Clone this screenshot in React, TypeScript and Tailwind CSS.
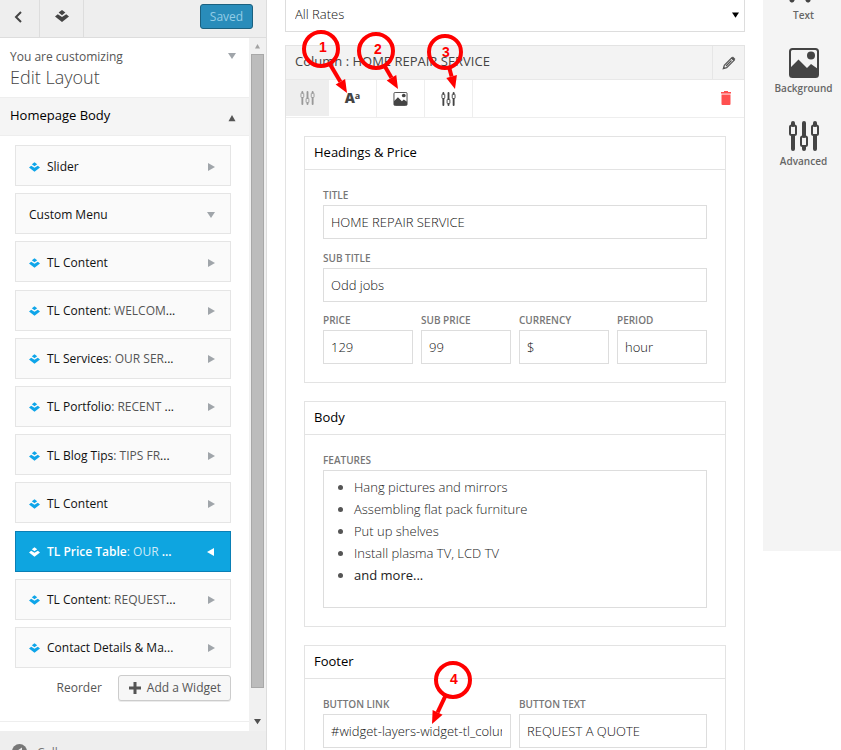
import React, { useId } from "react";

function LayersIcon({ className }: { className: string }) {
  return (
    <svg viewBox="0 0 14 12" className={className} fill="currentColor" aria-hidden="true">
      <path d="M7 0 10.4 2.600 7 5.200 3.600 2.600Z" />
      <path d="M0 6.500 2.800 4.300 7 7 11.200 4.300 14 6.500 7 12Z" />
    </svg>
  );
}

function Triangle({ dir, className }: { dir: "up" | "down" | "left" | "right"; className: string }) {
  const d = {
    up: "M0 7 4 0 8 7Z",
    down: "M0 1 8 1 4 7Z",
    left: "M7 0 7 8 0 4Z",
    right: "M1 0 8 4 1 8Z",
  }[dir];
  return (
    <svg viewBox="0 0 8 8" className={className} fill="currentColor" aria-hidden="true">
      <path d={d} />
    </svg>
  );
}

function SlidersIcon({ className }: { className: string }) {
  return (
    <svg viewBox="0 0 30 30" className={className} fill="none" stroke="currentColor" aria-hidden="true">
      <path d="M4 2V4M4 15V28M15 2V15M15 26V28M26 2V4M26 15V28" strokeWidth="4" strokeLinecap="round" />
      <rect x="1" y="4.500" width="6" height="9.500" rx="1.500" strokeWidth="2" />
      <rect x="12" y="15.500" width="6" height="9.500" rx="1.500" strokeWidth="2" />
      <rect x="23" y="4.500" width="6" height="9.500" rx="1.500" strokeWidth="2" />
    </svg>
  );
}

function PictureIcon({ className }: { className: string }) {
  return (
    <svg viewBox="0 0 30 30" className={className} aria-hidden="true">
      <rect x="1" y="1" width="28" height="28" rx="2.500" fill="none" stroke="currentColor" strokeWidth="2" />
      <circle cx="22" cy="7.500" r="4" fill="currentColor" />
      <path d="M1 20 9.500 11.500 18 20 22 16 29 21V28H1Z" fill="currentColor" />
    </svg>
  );
}

type Item = { name: string; extra?: string; icon?: boolean; active?: boolean; dots?: boolean };

const items: Item[] = [
  { name: "Slider", icon: true },
  { name: "Custom Menu" },
  { name: "TL Content", icon: true },
  { name: "TL Content", extra: "WELCOM", icon: true },
  { name: "TL Services", extra: "OUR SER", icon: true },
  { name: "TL Portfolio", extra: "RECENT ", icon: true },
  { name: "TL Blog Tips", extra: "TIPS FR", icon: true },
  { name: "TL Content", icon: true },
  { name: "TL Price Table", extra: "OUR ", icon: true, active: true },
  { name: "TL Content", extra: "REQUEST", icon: true },
  { name: "Contact Details & Ma", icon: true, dots: true },
];

function WidgetRow({ item }: { item: Item }) {
  return (
    <li>
      <button
        className={
          item.active
            ? "flex h-[41px] w-full items-center border border-[#0a7fb5] bg-[#0ea5e0] pr-[15px] pl-[13px] pt-[2px] text-left text-[12px] font-semibold text-white"
            : "flex h-[41px] w-full items-center border border-[#e5e5e5] bg-[#fafafa] pr-[15px] pl-[13px] pt-[2px] text-left text-[12px] font-medium text-[#111]"
        }
      >
        {item.icon && (
          <LayersIcon className={item.active ? "mr-[7px] h-[10px] w-[11px]" : "mr-[7px] h-[10px] w-[11px] text-[#0ea5e9]"} />
        )}
        <span className="flex-1 whitespace-pre">
          {item.name}
          {item.extra && (
            <span className={item.active ? "font-medium text-[#cdeaf8]" : "font-normal text-[#555]"}>
              <span>: </span>
              {item.extra}
            </span>
          )}
          {(item.extra || item.dots) && "..."}
        </span>
        <Triangle
          dir={item.active ? "left" : item.icon ? "right" : "down"}
          className={item.active ? "h-2 w-2" : "h-2 w-2 text-[#a0a5aa]"}
        />
      </button>
    </li>
  );
}

function Sidebar() {
  return (
    <aside className="flex w-[267px] shrink-0 flex-col border-r border-[#ddd] bg-[#eee]">
      <div className="flex h-[38px] shrink-0 border-b border-[#ddd] text-[#444]">
        <button aria-label="Back" className="flex w-10 items-center justify-center border-r border-[#ddd] pr-1 pb-1">
          <svg viewBox="0 0 8 12" className="h-3 w-2" fill="none" stroke="currentColor" strokeWidth="2" aria-hidden="true">
            <path d="M7 1 2 6 7 11" />
          </svg>
        </button>
        <button aria-label="Layers" className="flex w-11 items-center justify-center border-r border-[#ddd] pb-[5px]">
          <LayersIcon className="h-3 w-[14px]" />
        </button>
        <button className="mt-1 mr-[13px] ml-auto h-[25px] w-[53px] rounded-[3px] border border-[#1b607f] bg-[#298cba] text-[12px] text-[#94cde7]">
          Saved
        </button>
      </div>
      <div className="flex min-h-0 flex-1">
        <div className="flex min-w-0 flex-1 flex-col bg-white">
          <div className="flex h-[59px] shrink-0 justify-between px-[10px] pt-[10px] pr-[13px]">
            <div>
              <p className="text-[12px] leading-[18px] text-[#555]">You are customizing</p>
              <h1 className="text-[18px] leading-[22px] font-light text-[#444]">Edit Layout</h1>
            </div>
            <Triangle dir="down" className="mt-[4px] h-2 w-2 text-[#a0a5aa]" />
          </div>
          <h2 className="flex h-[39px] shrink-0 items-center justify-between border-y border-[#eee] bg-[#f5f5f5] pr-[13px] pb-px pl-[10px] text-[13px] font-medium text-black">
            Homepage Body
            <Triangle dir="up" className="mt-1 h-[7px] w-2 text-[#555]" />
          </h2>
          <ul className="mr-[18px] ml-[15px] mt-[9px] flex h-[523px] shrink-0 flex-col justify-between">
            {items.map((item, i) => (
              <WidgetRow key={i} item={item} />
            ))}
          </ul>
          <div className="mt-[7px] mr-[18px] mb-5 flex items-center justify-end gap-4 text-[12px] text-[#555]">
            <button>Reorder</button>
            <button className="flex h-[26px] items-center gap-[5px] rounded-[3px] border border-[#ccc] bg-[#f7f7f7] px-[9px] shadow-[0_1px_0_rgba(0,0,0,0.08)]">
              <svg viewBox="0 0 14 12" className="h-3 w-[14px]" stroke="#555" strokeWidth="3" aria-hidden="true">
                <path d="M7 0V12M1 6H13" />
              </svg>
              Add a Widget
            </button>
          </div>
          <div className="border-t border-[#eee]" />
        </div>
        <div className="flex w-[17px] shrink-0 flex-col items-center justify-between bg-[#f1f1f1] py-[6px]">
          <Triangle dir="up" className="h-[5px] w-[7px] text-[#a3a3a3]" />
          <div className="mt-[5px] mb-[30px] w-[13px] flex-1 border border-[#a8a8a8] bg-[#bcbcbc]" />
          <Triangle dir="down" className="h-[7px] w-[7px] text-[#505050]" />
        </div>
      </div>
      <button className="flex h-[19px] shrink-0 items-start gap-[10px] overflow-hidden pt-[13px] pl-3 text-left text-[12px] leading-[18px] text-[#777]">
        <svg viewBox="0 0 15 15" className="h-[15px] w-[15px] shrink-0" aria-hidden="true">
          <circle cx="7.500" cy="7.500" r="7.500" fill="#777" />
          <path d="M4 7.500 10 3.500V11.500Z" fill="#eee" />
        </svg>
        Collapse
      </button>
    </aside>
  );
}

function Field({ label, value, className = "" }: { label: string; value: string; className?: string }) {
  const id = useId();
  return (
    <div className={className}>
      <label htmlFor={id} className="mb-[3px] block text-[10px] leading-[14px] font-semibold text-[#777] uppercase">
        {label}
      </label>
      <input
        id={id}
        defaultValue={value}
        className="block h-[34px] w-full border border-[#ddd] bg-white pr-2 pb-px pl-[7px] text-[13px] font-light text-[#111] outline-none"
      />
    </div>
  );
}

function Card({ title, children }: { title: string; children: React.ReactNode }) {
  return (
    <section className="border border-[#e3e3e3] bg-white">
      <h3 className="h-[33px] border-b border-[#e3e3e3] px-[9px] text-[13px] leading-[31px] font-medium text-black">{title}</h3>
      <div className="p-[18px]">{children}</div>
    </section>
  );
}

function Callout({ n, className, r, cx, cy, tx, ty, lx, ly }: {
  n: string; className: string; r: number; cx: number; cy: number; tx: number; ty: number; lx: number; ly: number;
}) {
  const a = Math.atan2(ty - cy, tx - cx);
  const ux = Math.cos(a);
  const uy = Math.sin(a);
  const bx = tx - ux * 13;
  const by = ty - uy * 13;
  return (
    <svg viewBox="0 0 60 70" className={className} aria-hidden="true">
      <circle cx={cx} cy={cy} r={r} fill="none" stroke="#f00" strokeWidth="4" />
      <path d={`M${cx + ux * r} ${cy + uy * r}L${bx} ${by}`} stroke="#f00" strokeWidth="4" />
      <path d={`M${tx} ${ty}L${bx - uy * 5.5} ${by + ux * 5.5}L${bx + uy * 5.5} ${by - ux * 5.5}Z`} fill="#f00" />
      <text x={lx} y={ly} textAnchor="middle" fill="#f00" className="font-['Liberation_Sans'] text-[14px] font-bold">
        {n}
      </text>
    </svg>
  );
}

function Editor() {
  return (
    <main className="relative min-w-0 flex-1 px-[18px]">
      <div className="relative -mt-1">
        <select
          aria-label="Rates"
          className="block h-9 w-full appearance-none border border-[#ddd] bg-white px-[9px] pt-px text-[13px] font-light text-[#111]"
        >
          <option>All Rates</option>
        </select>
        <Triangle dir="down" className="pointer-events-none absolute top-[15px] right-[6px] h-2 w-[7px] text-black" />
      </div>
      <div className="mt-[13px] border border-[#e3e3e3]">
        <div className="flex h-[34px] border-b border-[#e8e8e8] bg-[#f3f3f3]">
          <h2 className="flex-1 px-[9px] text-[13px] leading-[31px] text-[#444]">Column : HOME REPAIR SERVICE</h2>
          <button aria-label="Edit" className="flex w-8 items-center justify-center border-l border-[#e6e6e6] text-[#555]">
            <svg viewBox="0 0 14 14" className="h-[14px] w-[14px]" fill="none" stroke="currentColor" strokeWidth="1.200" aria-hidden="true">
              <path d="M1.500 12.500 2.300 9.300 9.700 1.900 12.100 4.300 4.700 11.700ZM4 10 9.500 4.500" />
              <path d="M10 1.500 12.500 4" strokeWidth="2.500" />
              <path d="M.5 13.500 1.500 10.500 3.500 12.500Z" fill="currentColor" stroke="none" />
            </svg>
          </button>
        </div>
        <div className="flex h-[38px] border-b border-[#eee] text-[#444]">
          <button aria-label="Advanced" className="mb-px flex w-[43px] items-center justify-center bg-[#eee] text-[#999]">
            <SlidersIcon className="h-[14px] w-[15px]" />
          </button>
          <button aria-label="Text" className="flex w-12 justify-center border-r border-[#eee] pt-[8px] text-[14px] leading-[20px] font-extrabold">
            A<span className="text-[9px] leading-[15px] font-bold">a</span>
          </button>
          <button aria-label="Background" className="flex w-12 items-center justify-center border-r border-[#eee]">
            <PictureIcon className="h-[14px] w-[15px]" />
          </button>
          <button aria-label="Settings" className="flex w-12 items-center justify-center border-r border-[#eee]">
            <SlidersIcon className="h-[14px] w-[15px]" />
          </button>
          <button aria-label="Delete" className="mr-[13px] ml-auto pb-[2px] text-[#ff5050]">
            <svg viewBox="0 0 10 14" className="h-[14px] w-[10px]" fill="currentColor" aria-hidden="true">
              <path d="M0 1H3V0H7V1H10V2.500H0Z" />
              <path d="M.5 4H9.500V13Q9.500 14 8.500 14H1.500Q.5 14 .5 13Z" />
              <path d="M.5 2.500H9.500V4H.5Z" opacity=".5" />
            </svg>
          </button>
        </div>
        <div className="flex flex-col gap-[18px] p-[18px]">
          <Card title="Headings & Price">
            <Field label="Title" value="HOME REPAIR SERVICE" className="mb-3" />
            <Field label="Sub Title" value="Odd jobs" className="mb-[11px]" />
            <div className="grid grid-cols-4 gap-2">
              <Field label="Price" value="129" />
              <Field label="Sub Price" value="99" />
              <Field label="Currency" value="$" />
              <Field label="Period" value="hour" />
            </div>
          </Card>
          <Card title="Body">
            <p id="features" className="mb-[3px] text-[10px] leading-[14px] font-semibold text-[#777] uppercase">Features</p>
            <div
              role="textbox"
              aria-multiline="true"
              aria-labelledby="features"
              contentEditable
              suppressContentEditableWarning
              className="h-[138px] border border-[#ddd] pt-[5px] pl-[30px] text-[13px] leading-[22px] font-light text-[#222] outline-none"
            >
              <ul className="list-disc marker:text-[#555]">
                <li>Hang pictures and mirrors</li>
                <li>Assembling flat pack furniture</li>
                <li>Put up shelves</li>
                <li>Install plasma TV, LCD TV</li>
                <li className="font-medium">and more...</li>
              </ul>
            </div>
          </Card>
          <Card title="Footer">
            <div className="grid grid-cols-2 gap-2">
              <Field label="Button Link" value="#widget-layers-widget-tl_column-4" />
              <Field label="Button Text" value="REQUEST A QUOTE" />
            </div>
          </Card>
        </div>
      </div>
      <Callout n="1" className="pointer-events-none absolute top-[28px] left-[33px] h-[70px] w-[60px]" r={17} cx={21} cy={21} tx={47} ty={65} lx={23} ly={24} />
      <Callout n="2" className="pointer-events-none absolute top-[28px] left-[88px] h-[70px] w-[60px]" r={17} cx={21} cy={23} tx={43} ty={61} lx={23} ly={26} />
      <Callout n="3" className="pointer-events-none absolute top-[28px] left-[158px] h-[70px] w-[60px]" r={16} cx={20} cy={24} tx={30} ty={61} lx={21} ly={29} />
      <Callout n="4" className="pointer-events-none absolute top-[656px] left-[163px] h-[70px] w-[60px]" r={17} cx={23} cy={24} tx={2} ty={68} lx={24} ly={28} />
    </main>
  );
}

function Tools() {
  return (
    <nav className="flex h-[551px] w-[78px] shrink-0 flex-col bg-[#f4f4f4] text-[10px] leading-[14px] font-semibold text-[#666]">
      <button className="-mt-[27px] flex h-[73px] flex-col items-center gap-[5px] pl-[3px]">
        <svg viewBox="0 0 30 30" className="h-[30px] w-[30px] shrink-0" aria-hidden="true">
          <path d="M3 27 11 2M19 27 11 2" stroke="#444" strokeWidth="5" strokeLinecap="round" />
        </svg>
        Text
      </button>
      <button className="flex h-[73px] flex-col items-center gap-[3px] pt-[2px] pl-[3px]">
        <PictureIcon className="h-[30px] w-[30px] shrink-0 text-[#444]" />
        Background
      </button>
      <button className="flex h-[73px] flex-col items-center gap-[3px] pt-[2px] pl-[3px]">
        <SlidersIcon className="h-[30px] w-[30px] shrink-0 text-[#444]" />
        Advanced
      </button>
    </nav>
  );
}

export default function App() {
  return (
    <div className="flex h-screen overflow-hidden bg-white font-['Open_Sans','Noto_Sans',sans-serif]">
      <Sidebar />
      <Editor />
      <Tools />
    </div>
  );
}
